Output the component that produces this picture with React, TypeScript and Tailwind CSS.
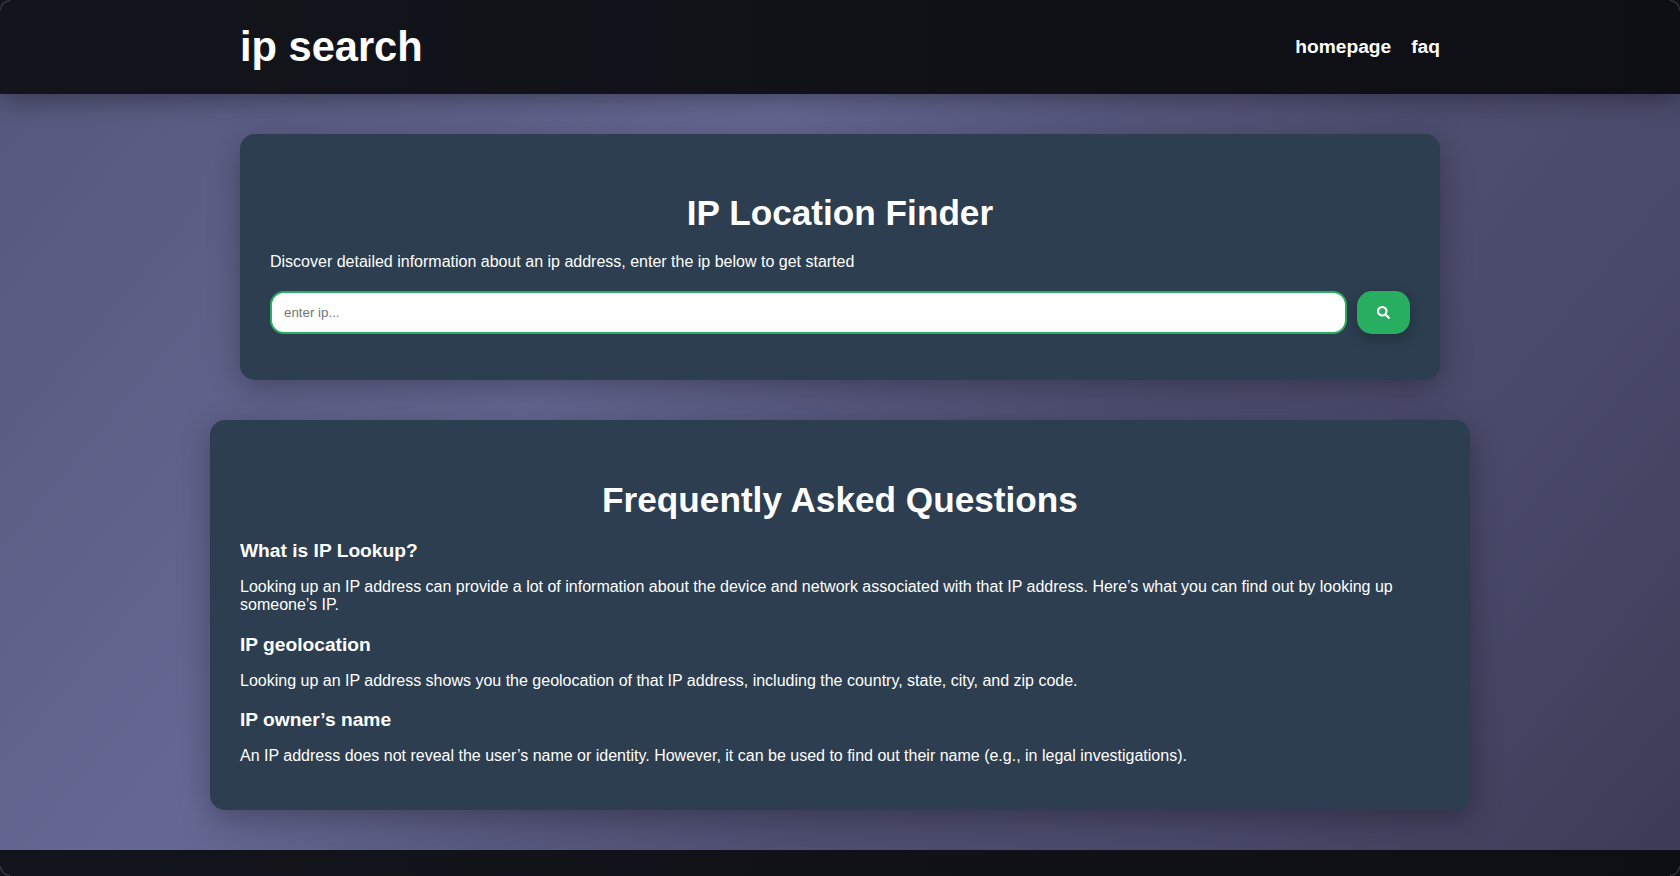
import { FaSearch } from "react-icons/fa";

const faqs = [
    {
        q: "What is IP Lookup?",
        a: "Looking up an IP address can provide a lot of information about the device and network associated with that IP address. Here’s what you can find out by looking up someone’s IP.",
    },
    {
        q: "IP geolocation",
        a: "Looking up an IP address shows you the geolocation of that IP address, including the country, state, city, and zip code.",
    },
    {
        q: "IP owner’s name",
        a: "An IP address does not reveal the user’s name or identity. However, it can be used to find out their name (e.g., in legal investigations).",
    },
];

export default function App() {
    return (
        <div className="relative h-[876px] overflow-hidden flex flex-col font-['Liberation_Sans',Arial,sans-serif] text-white bg-[linear-gradient(130deg,#54567a_0%,#666894_36%,#57587e_50%,#4e4f71_62%,#49496a_78%,#3d3b56_100%)]">
            <header className="relative z-10 h-[94px] shrink-0 bg-[linear-gradient(90deg,#13151c,#0e0f14)] shadow-[0_6px_24px_rgba(0,0,0,0.35)] flex justify-center">
                <div className="w-[1200px] flex items-center justify-between">
                    <h1 className="text-[41.6px] font-bold leading-none">ip search</h1>
                    <nav className="flex gap-5 text-[19.2px] font-bold">
                        <a>homepage</a>
                        <a>faq</a>
                    </nav>
                </div>
            </header>

            <main className="flex-1 flex flex-col items-center pt-10 gap-10">
                <section className="w-[1200px] h-[246px] rounded-[15px] bg-[#2c3e50] shadow-[0_8px_32px_rgba(0,0,0,0.3)] px-[30px] pt-[58px]">
                    <h2 className="text-[35.2px] font-bold text-center leading-[41px]">IP Location Finder</h2>
                    <p className="mt-[20px] text-base leading-[18px]">Discover detailed information about an ip address, enter the ip below to get started</p>
                    <div className="mt-[20px] flex gap-[10px]">
                        <input
                            placeholder="enter ip..."
                            className="flex-1 h-[43px] rounded-[14px] border-2 border-[#27ae60] bg-white px-3 text-[13.33px] text-black placeholder:text-[#757575] outline-none"
                        />
                        <button className="w-[53px] h-[43px] rounded-[15px] bg-[#27ae60] shadow-[0_4px_15px_rgba(0,0,0,0.25)] flex items-center justify-center">
                            <FaSearch size={13} />
                        </button>
                    </div>
                </section>

                <section className="w-[1260px] h-[390px] rounded-[15px] bg-[#2c3e50] shadow-[0_8px_32px_rgba(0,0,0,0.3)] px-[30px] pt-[59px]">
                    <h2 className="text-[35.2px] font-bold text-center leading-[41px]">Frequently Asked Questions</h2>
                    {faqs.map((f, i) => (
                        <div key={f.q} className={i === 0 ? "mt-[20px]" : "mt-[19.5px]"}>
                            <h3 className="text-[19.2px] font-bold leading-[22px]">{f.q}</h3>
                            <p className="mt-[16px] text-base leading-[18px]">{f.a}</p>
                        </div>
                    ))}
                </section>
            </main>

            <footer className="h-[26px] shrink-0 bg-[linear-gradient(90deg,#13151c,#0e0f14)]" />

            {/* faint window corners */}
            <div className="absolute z-20 left-0 top-0 w-[10px] h-[10px] rounded-tl-[10px] border-t border-l border-white/20" />
            <div className="absolute z-20 right-0 top-0 w-[10px] h-[10px] rounded-tr-[10px] border-t border-r border-white/20" />
            <div className="absolute z-20 left-0 bottom-0 w-[10px] h-[10px] rounded-bl-[10px] border-b border-l border-white/20" />
            <div className="absolute z-20 right-0 bottom-0 w-[10px] h-[10px] rounded-br-[10px] border-b border-r border-white/20" />
        </div>
    );
}
